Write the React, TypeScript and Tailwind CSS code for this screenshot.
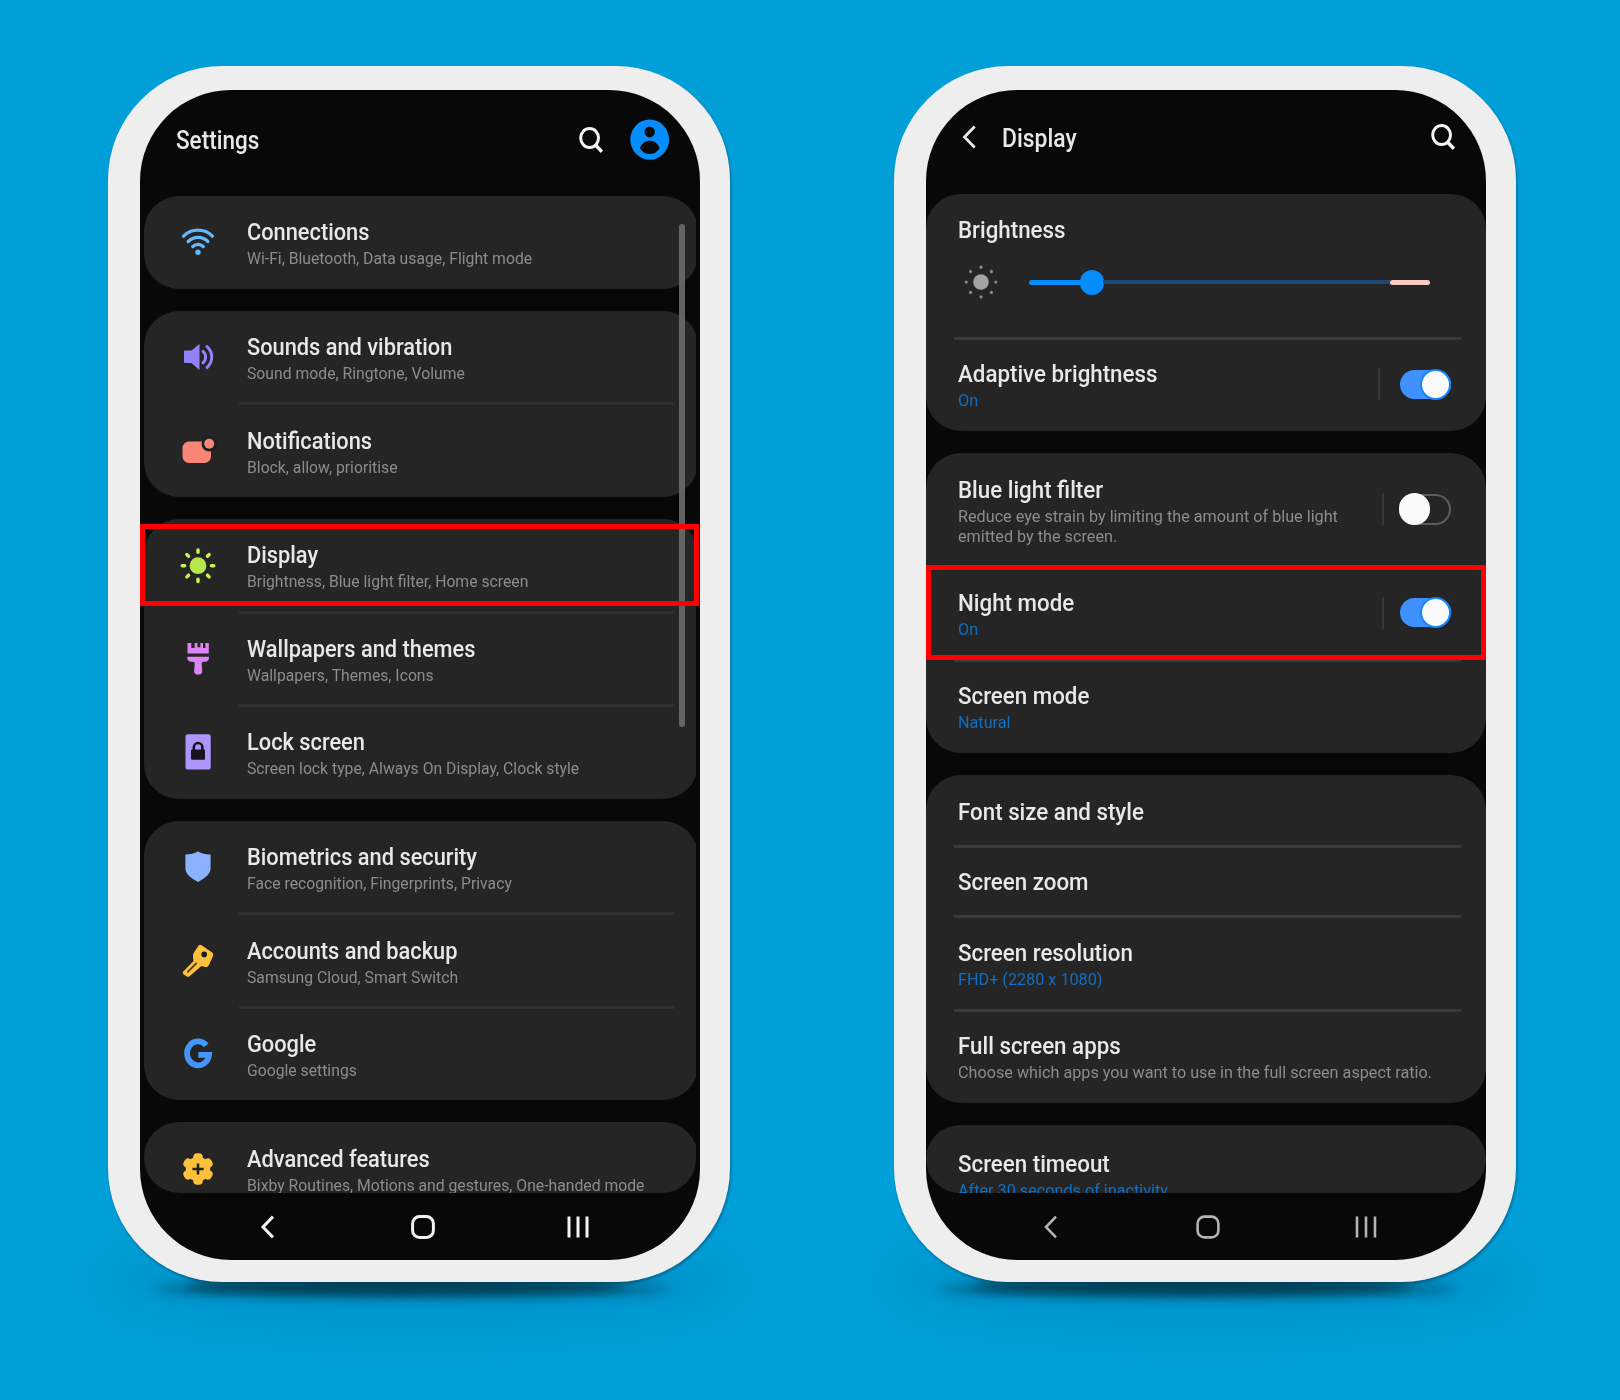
import React from "react";

type Row = { title: string; sub: string; icon: React.ReactNode };

const Svg = ({ children }: { children: React.ReactNode }) => (
  <svg width="40" height="40" viewBox="0 0 40 40" className="shrink-0">
    {children}
  </svg>
);

const rays = [0, 45, 90, 135, 180, 225, 270, 315];

const WifiIcon = () => (
  <Svg>
    <g fill="none" stroke="#62b8f8" strokeWidth="3.4" strokeLinecap="round">
      <path d="M5.6 14.1a20.4 20.4 0 0 1 28.8 0" />
      <path d="M10.2 19.5a13.8 13.8 0 0 1 19.6 0" />
      <path d="M14.8 24.5a7.4 7.4 0 0 1 10.4 0" />
    </g>
    <circle cx="20" cy="30.3" r="2.7" fill="#62b8f8" />
  </Svg>
);

const SoundIcon = () => (
  <Svg>
    <path d="M7 13.5h6.5L21.5 7v26L13.5 26H7a1 1 0 0 1-1-1V14.5a1 1 0 0 1 1-1z" fill="#9183fb" />
    <g fill="none" stroke="#9183fb" strokeWidth="3" strokeLinecap="round">
      <path d="M25 14.4a7.6 7.6 0 0 1 0 11.4" />
      <path d="M29 9.6a14 14 0 0 1 0 21" />
    </g>
  </Svg>
);

const NotificationIcon = () => (
  <Svg>
    <rect x="4.5" y="10.5" width="28.5" height="21.5" rx="6.5" fill="#f98676" />
    <circle cx="31.2" cy="12.8" r="7.6" fill="#1c2022" />
    <circle cx="31.2" cy="12.8" r="5" fill="#f98676" />
  </Svg>
);

const SunIcon = () => (
  <Svg>
    <circle cx="20" cy="19.7" r="8.4" fill="#b4e84c" />
    <g stroke="#c3f94f" strokeWidth="3.4" strokeLinecap="round">
      {rays.map((a) => (
        <path key={a} d="M20 3.9v2.4" transform={`rotate(${a} 20 19.7)`} />
      ))}
    </g>
  </Svg>
);

const BrushIcon = () => (
  <Svg>
    <path
      d="M9.5 3.9h3.8v5h3.4v-5h2.7v4.3h3V3.9H25v5h2.4v-5h3.4v10.6H9.5zM9.300 17.700H31v1.600a4 4 0 0 1-4 3.400h-1.600a1.800 1.800 0 0 0-1.700 2l.6 7a4 3.800 0 0 1-8.200 0l.6-7a1.800 1.800 0 0 0-1.700-2h-1.700a4 4 0 0 1-4-3.400z"
      fill="#dd84f7"
    />
  </Svg>
);

const LockIcon = () => (
  <Svg>
    <rect x="7.5" y="2.3" width="25.2" height="35.2" rx="2.6" fill="#ae94fc" />
    <rect x="13" y="17.6" width="14" height="10.2" rx="1" fill="#17151c" />
    <path d="M15.800 18.200v-2.600a4.300 4.600 0 0 1 8.600 0v2.600" fill="none" stroke="#17151c" strokeWidth="2.600" />
  </Svg>
);

const ShieldIcon = () => (
  <Svg>
    <path
      d="M20 4.400c3.400 2.100 7.600 2.800 12.600 3v13.600c0 5.600-4.400 9.600-12.600 14C11.800 30.600 7.400 26.600 7.400 21V7.400C12.400 7.200 16.600 6.500 20 4.400z"
      fill="#8bb2fc"
    />
  </Svg>
);

const KeyIcon = () => (
  <Svg>
    <path
      d="M23.600 4.200L33.800 11.300a3 3 0 0 1 1.200 3.700L31.200 23.600a4 4 0 0 1-5 2.200L23.400 25 11.600 35.200a2.400 2.400 0 0 1-2.800.3L5.700 33.400a2 2 0 0 1-.5-2.900L15.400 20.200 15 14.600a4 4 0 0 1 .7-2.500L20.300 5a2.400 2.400 0 0 1 3.300-.8z"
      fill="#fdc13c"
    />
    <circle cx="26.200" cy="13.400" r="2.800" fill="#1a1c22" />
    <path d="M9.800 30.800l8.400-8.400" stroke="#4a3c1e" strokeWidth="1.800" strokeLinecap="round" />
  </Svg>
);

const GoogleIcon = () => (
  <Svg>
    <path
      d="M28.300 11.300A11 12 0 1 0 31 20.800H20.300"
      fill="none"
      stroke="#4596fb"
      strokeWidth="5.800"
    />
  </Svg>
);

const GearIcon = () => (
  <Svg>
    <g fill="#fdc13c">
      <circle cx="20" cy="20" r="12.200" />
      {[0, 60, 120, 180, 240, 300].map((a) => (
        <rect key={a} x="15.200" y="4.200" width="9.600" height="10" rx="4" transform={`rotate(${a} 20 20)`} />
      ))}
    </g>
    <path d="M20 14.400v11.200M14.400 20h11.200" stroke="#241f17" strokeWidth="2.600" />
  </Svg>
);

const SearchIcon = () => (
  <svg width="26" height="28" viewBox="0 0 26 28" fill="none" stroke="#f4f4f4" strokeWidth="3">
    <ellipse cx="11.600" cy="12" rx="8.900" ry="9.600" />
    <path d="M17.700 19.300l6.200 6.400" strokeWidth="3.400" />
  </svg>
);

const AvatarIcon = () => (
  <svg width="40" height="42" viewBox="0 0 40 42">
    <ellipse cx="19.700" cy="20.600" rx="19.400" ry="20.100" fill="#058cfd" />
    <ellipse cx="19.700" cy="12.900" rx="5.200" ry="5.500" fill="#0a0a0a" />
    <path d="M9.900 29.200c1.600-5 5.400-7.500 9.800-7.500s8.200 2.500 9.800 7.500c-2.200 3.900-5.800 5.900-9.800 5.900s-7.600-2-9.800-5.900z" fill="#0a0a0a" />
  </svg>
);

const ChevronLeft = ({ className }: { className: string }) => (
  <svg width="15" height="24" viewBox="0 0 15 24" fill="none" stroke="currentColor" strokeWidth="2.800" className={className}>
    <path d="M13.700 1.600L3.500 12l10.200 10.400" />
  </svg>
);

const NavBar = ({ className, stroke }: { className: string; stroke: number }) => (
  <div className={`flex items-center ${className}`}>
    <svg width="15" height="24" viewBox="0 0 15 24" fill="none" stroke="currentColor" strokeWidth={stroke}>
      <path d="M13 1.600L3 12l10 10.400" />
    </svg>
    <svg width="24" height="24" viewBox="0 0 24 24" fill="none" stroke="currentColor" strokeWidth={stroke}>
      <rect x="1.600" y="1.600" width="20.800" height="20.800" rx="7" />
    </svg>
    <svg width="22" height="22" viewBox="0 0 22 22" stroke="currentColor" strokeWidth={stroke} className="-ml-[3px]">
      <path d="M2 .5v21M11 .5v21M20 .5v21" />
    </svg>
  </div>
);

const groups: Row[][] = [
  [{ title: "Connections", sub: "Wi-Fi, Bluetooth, Data usage, Flight mode", icon: <WifiIcon /> }],
  [
    { title: "Sounds and vibration", sub: "Sound mode, Ringtone, Volume", icon: <SoundIcon /> },
    { title: "Notifications", sub: "Block, allow, prioritise", icon: <NotificationIcon /> },
  ],
  [
    { title: "Display", sub: "Brightness, Blue light filter, Home screen", icon: <SunIcon /> },
    { title: "Wallpapers and themes", sub: "Wallpapers, Themes, Icons", icon: <BrushIcon /> },
    { title: "Lock screen", sub: "Screen lock type, Always On Display, Clock style", icon: <LockIcon /> },
  ],
  [
    { title: "Biometrics and security", sub: "Face recognition, Fingerprints, Privacy", icon: <ShieldIcon /> },
    { title: "Accounts and backup", sub: "Samsung Cloud, Smart Switch", icon: <KeyIcon /> },
    { title: "Google", sub: "Google settings", icon: <GoogleIcon /> },
  ],
  [{ title: "Advanced features", sub: "Bixby Routines, Motions and gestures, One-handed mode", icon: <GearIcon /> }],
];

const SettingsRow = ({ row, first }: { row: Row; first: boolean }) => (
  <>
    {!first && <div className="-my-[1.5px] mr-6 ml-[95px] h-[3px] bg-[#303030]" />}
    <div className="flex h-[93.2px] items-center gap-[28.5px] pl-[34px]">
      {row.icon}
      <div className={`self-start whitespace-nowrap ${first ? "pt-[21.3px]" : "pt-[21.6px]"}`}>
        <div className="origin-left scale-x-[0.908] text-[24px] leading-[31px] font-medium text-[#e8e8e8]">{row.title}</div>
        <div className="origin-left scale-x-[0.926] text-[17px] leading-5 text-[#8c8c8c]">{row.sub}</div>
      </div>
    </div>
  </>
);

const Phone = ({ children }: { children: React.ReactNode }) => (
  <div className="relative h-[1216px] w-[622px]">
    <div className="absolute top-[1170px] left-[-10px] h-[90px] w-[642px] rounded-[50%] bg-[#005a90]/15 blur-[24px]" />
    <div className="absolute top-[1214px] left-[44px] h-[18px] w-[520px] rounded-[50%] bg-[#00445c]/60 blur-[6px]" />
    <div className="absolute top-[1214px] left-[78px] h-[14px] w-[440px] rounded-[50%/50%] bg-[#003c52] blur-[5px]" />
    <div className="relative h-full w-full rounded-[114px] bg-[#eeeeee] pt-6 pl-8 shadow-[1px_2px_3px_rgba(0,50,80,0.45)]">
      <div className="relative h-[1170px] w-[560px] overflow-hidden rounded-[91px] bg-[#080808]">{children}</div>
    </div>
  </div>
);

const Highlight = ({ className }: { className: string }) => (
  <div className={`absolute border-5 border-[#ff0000] ${className}`} />
);

const SettingsScreen = () => (
  <Phone>
    <div className="flex h-[105.6px] items-start pl-[36px]">
      <div className="w-[402px] pt-[35px] text-[#e8e8e8]">
        <div className="origin-left scale-x-[0.9] text-[25px] leading-[32px] font-medium">Settings</div>
      </div>
      <div className="pt-[35.5px]"><SearchIcon /></div>
      <div className="pt-[29px] pl-[26px]"><AvatarIcon /></div>
    </div>
    <div className="mx-1 flex h-[997.5px] flex-col gap-[22px] overflow-hidden rounded-b-[34px]">
      {groups.map((rows, i) => (
        <div key={i} className="w-[553.5px] shrink-0 overflow-hidden rounded-[35px] bg-[#252525] last:h-[71px]">
          {rows.map((row, j) => (
            <SettingsRow key={row.title} row={row} first={j === 0} />
          ))}
        </div>
      ))}
    </div>
    <NavBar className="mt-[21.5px] gap-[135.5px] pl-[120px] text-[#f2f2f2]" stroke={3} />
    <div className="absolute top-[133.5px] left-[539px] h-[503px] w-[6px] rounded-full bg-[#6b6b6b]/90" />
    <Highlight className="top-[434px] left-0 h-[82px] w-[559px]" />
  </Phone>
);

const Switch = ({ on, className }: { on: boolean; className: string }) => (
  <div className={`ml-auto flex h-8 items-center ${className}`}>
    <div className="h-8 w-[2px] bg-[#383838]" />
    {on ? (
      <div className="ml-auto flex h-[29px] w-[51px] items-center justify-end rounded-full bg-[#3e91ff]">
        <div className="h-[31.5px] w-[31px] shrink-0 rounded-full border-2 border-[#1687fb] bg-[#fafafa]" />
      </div>
    ) : (
      <div className="ml-auto flex h-[31px] w-[52px] items-center rounded-full border-2 border-[#5c5c5c]">
        <div className="-ml-[2px] h-[32px] w-[31px] shrink-0 rounded-full bg-[#fafafa]" />
      </div>
    )}
  </div>
);

const Item = ({ title, sub, blue, className, children }: {
  title: string;
  sub?: React.ReactNode;
  blue?: boolean;
  className: string;
  children?: React.ReactNode;
}) => (
  <div className={`flex pr-[35px] pl-[32px] ${className}`}>
    <div className="w-0 whitespace-nowrap">
      <div className="w-max origin-left scale-x-[0.93] text-[24px] leading-[31px] font-medium text-[#e8e8e8]">{title}</div>
      {sub && (
        <div className={`w-max origin-left scale-x-[0.953] text-[17px] leading-5 ${blue ? "text-[#0f6fc4]" : "text-[#8c8c8c]"}`}>{sub}</div>
      )}
    </div>
    {children}
  </div>
);

const Divider = () => <div className="-my-[1.5px] mr-[25px] ml-[27.5px] h-[3px] shrink-0 bg-[#3a3a3a]" />;

const Card = ({ className, children }: { className: string; children: React.ReactNode }) => (
  <div className={`shrink-0 overflow-hidden rounded-[35px] bg-[#252525] ${className}`}>{children}</div>
);

const DisplayScreen = () => (
  <Phone>
    <div className="flex h-[103.6px] items-start pl-[35px] text-[#e8e8e8]">
      <ChevronLeft className="mt-[35px]" />
      <div className="ml-[26px] w-[428px] pt-[32.5px]">
        <div className="origin-left scale-x-[0.915] text-[25px] leading-[32px] font-medium">Display</div>
      </div>
      <div className="pt-[33px]"><SearchIcon /></div>
    </div>
    <div className="flex h-[999.2px] flex-col gap-[22px] overflow-hidden">
      <Card className="h-[237px]">
        <div className="h-[144.8px]">
          <Item title="Brightness" className="pt-[21px]" />
          <div className="flex h-[40px] items-center pt-[33px]">
            <svg width="40" height="40" viewBox="0 0 40 40" className="ml-[34.5px] shrink-0">
              <circle cx="20" cy="20" r="7.8" fill="#a3a3a3" />
              {rays.map((a) => (
                <circle key={a} cx="20" cy="5.2" r="1.6" fill="#8a8a8a" transform={`rotate(${a} 20 20)`} />
              ))}
            </svg>
            <div className="ml-[28px] flex h-[25px] items-center">
              <div className="h-[5px] w-[52px] rounded-l-full bg-[#058cfd]" />
              <div className="-ml-px h-[25px] w-[24px] rounded-full bg-[#058cfd]" />
              <div className="-ml-px h-[4px] w-[287px] bg-[#1c4a70]" />
              <div className="h-[5px] w-[40px] rounded-full bg-[#f9cbc6]" />
            </div>
          </div>
        </div>
        <Divider />
        <Item title="Adaptive brightness" sub="On" blue className="h-[92.4px] pt-[20.5px]">
          <Switch on className="mt-[9.5px] w-[73px]" />
        </Item>
      </Card>
      <Card className="h-[300px]">
        <Item
          title="Blue light filter"
          sub={<>Reduce eye strain by limiting the amount of blue light<br />emitted by the screen.</>}
          className="h-[114.5px] pt-[22px]"
        >
          <Switch on={false} className="mt-[18.5px] w-[69px]" />
        </Item>
        <Item title="Night mode" sub="On" blue className="h-[93.5px] pt-[20.8px]">
          <Switch on className="mt-[8.8px] w-[69px]" />
        </Item>
        <Divider />
        <Item title="Screen mode" sub="Natural" blue className="pt-[20.2px]" />
      </Card>
      <Card className="h-[328.6px]">
        <Item title="Font size and style" className="h-[71.8px] pt-[22px]" />
        <Divider />
        <Item title="Screen zoom" className="h-[70.6px] pt-[21px]" />
        <Divider />
        <Item title="Screen resolution" sub="FHD+ (2280 x 1080)" blue className="h-[93.2px] pt-[21px]" />
        <Divider />
        <Item title="Full screen apps" sub="Choose which apps you want to use in the full screen aspect ratio." className="pt-[21px]" />
      </Card>
      <Card className="h-[67.8px]">
        <Item title="Screen timeout" sub="After 30 seconds of inactivity" blue className="pt-[24.2px]" />
      </Card>
    </div>
    <NavBar className="mt-[22.5px] gap-[138px] pl-[117px] text-[#b4b4b4]" stroke={2.6} />
    <Highlight className="top-[475px] left-0 h-[95px] w-[560px]" />
  </Phone>
);

export default function App() {
  return (
    <div className="flex h-[1400px] w-[1620px] gap-[164px] overflow-hidden bg-[#009fd8] pt-[66px] pl-[108px] font-['Roboto',sans-serif]">
      <SettingsScreen />
      <DisplayScreen />
    </div>
  );
}
